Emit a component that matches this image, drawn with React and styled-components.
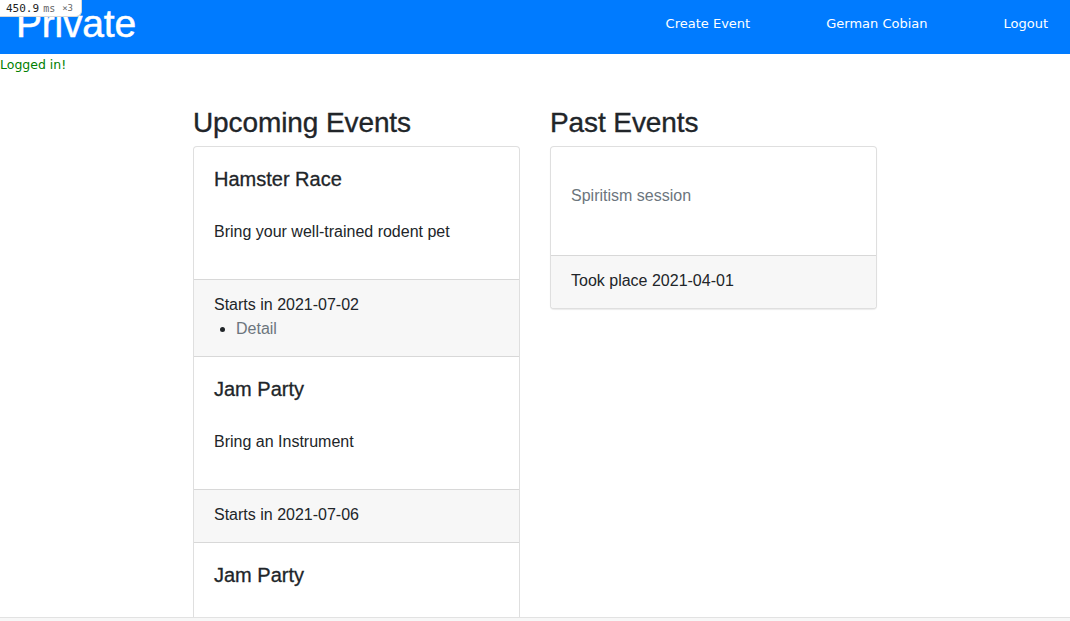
import React from 'react';
import styled, { createGlobalStyle } from 'styled-components';

const GlobalStyle = createGlobalStyle`
  html, body {
    margin: 0;
    padding: 0;
    height: 100%;
    background: #ffffff;
  }
  body {
    font-family: "Liberation Sans", Arial, sans-serif;
    color: #212529;
  }
  * {
    box-sizing: border-box;
  }
`;

const Page = styled.div`
  display: flex;
  flex-direction: column;
  height: 100vh;
  overflow: hidden;
  position: relative;
`;

const Navbar = styled.header`
  flex: none;
  height: 54px;
  background-color: #007bff;
  display: flex;
  justify-content: space-between;
  align-items: flex-start;
  overflow: hidden;
`;

const Brand = styled.div`
  color: #ffffff;
  font-family: "Liberation Sans", Arial, sans-serif;
  font-size: 39px;
  line-height: 39px;
  margin: 0 0 0 16px;
  padding-top: 4px;
  letter-spacing: -0.2px;
  -webkit-text-stroke: 0.5px #ffffff;
`;

const Nav = styled.nav`
  display: flex;
  align-items: center;
  gap: 76px;
  height: 46px;
  padding-right: 22px;
`;

const NavLink = styled.a`
  color: #ffffff;
  font-family: "DejaVu Sans", Verdana, sans-serif;
  font-size: 13px;
  text-decoration: none;
  cursor: pointer;
`;

const Flash = styled.div`
  flex: none;
  color: #008000;
  font-family: "DejaVu Sans", Verdana, sans-serif;
  font-size: 12.5px;
  line-height: 22px;
`;

const Main = styled.main`
  flex: 1;
  overflow: hidden;
  padding-top: 30px;
`;

const Container = styled.div`
  width: 684px;
  margin: 0 auto;
  display: grid;
  grid-template-columns: 327px 327px;
  gap: 30px;
  align-items: start;
`;

const Column = styled.section`
  display: flex;
  flex-direction: column;
`;

const Heading = styled.h3`
  margin: 0 0 6px;
  font-size: 28px;
  font-weight: 400;
  line-height: 34px;
  color: #212529;
  letter-spacing: -0.1px;
  -webkit-text-stroke: 0.35px #212529;
`;

const Card = styled.div`
  background: #ffffff;
  border: 1px solid rgba(0, 0, 0, 0.125);
  border-radius: 4px;
  overflow: hidden;
  box-shadow: ${p => (p.shadow ? '0 1px 1px rgba(0, 0, 0, 0.08)' : 'none')};
`;

const CardBody = styled.div`
  padding: 20px;
`;

const CardTitle = styled.h5`
  margin: 0 0 28px;
  font-size: 20px;
  font-weight: 400;
  line-height: 24px;
  color: #212529;
  -webkit-text-stroke: 0.3px #212529;
`;

const CardText = styled.p`
  margin: 0 0 15px;
  font-size: 16px;
  line-height: 24px;
  padding-top: 1px;
  color: ${p => (p.muted ? '#6c757d' : '#212529')};
`;

const Subtitle = styled(CardText)`
  margin: 16px 0 27px;
`;

const CardFooter = styled.div`
  background: #f7f7f7;
  border-top: 1px solid rgba(0, 0, 0, 0.125);
  border-bottom: ${p => (p.last ? 'none' : '1px solid rgba(0, 0, 0, 0.125)')};
  padding: 13px 20px 15px;
  font-size: 16px;
  line-height: 24px;
  color: #212529;
`;

const DetailList = styled.ul`
  margin: 0;
  padding-left: 22px;
  list-style: disc;
`;

const DetailLink = styled.a`
  color: #6c757d;
  text-decoration: none;
  cursor: pointer;
`;

const Footer = styled.footer`
  flex: none;
  height: 4px;
  background: #f7f7f7;
  border-top: 1px solid #e2e2e2;
`;

const TimingBadge = styled.div`
  position: absolute;
  top: 0;
  left: 0;
  height: 17px;
  padding: 0 8px 0 6px;
  display: flex;
  align-items: center;
  background: #ffffff;
  border: 1px solid #d8d8d8;
  border-top: none;
  border-left: none;
  border-bottom-right-radius: 6px;
  font-family: "DejaVu Sans Mono", "Liberation Mono", monospace;
  color: #222;
  white-space: nowrap;
`;

const TimingValue = styled.span`
  font-size: 11px;
`;

const TimingUnit = styled.span`
  font-size: ${p => p.size || 10}px;
  margin-left: ${p => p.gap || 4}px;
  color: #666;
`;

const upcoming = [
  { title: 'Hamster Race', text: 'Bring your well-trained rodent pet', date: '2021-07-02', detail: true },
  { title: 'Jam Party', text: 'Bring an Instrument', date: '2021-07-06' },
  { title: 'Jam Party', text: 'Bring an Instrument', date: '2021-07-10' },
];

const past = [{ text: 'Spiritism session', date: '2021-04-01' }];

const App = () => {
  return (
    <Page>
      <GlobalStyle />
      <Navbar>
        <Brand>Private</Brand>
        <Nav>
          <NavLink>Create Event</NavLink>
          <NavLink>German Cobian</NavLink>
          <NavLink>Logout</NavLink>
        </Nav>
      </Navbar>
      <Flash>Logged in!</Flash>
      <Main>
        <Container>
          <Column>
            <Heading>Upcoming Events</Heading>
            <Card>
              {upcoming.map((ev, i) => (
                <React.Fragment key={i}>
                  <CardBody>
                    <CardTitle>{ev.title}</CardTitle>
                    <CardText>{ev.text}</CardText>
                  </CardBody>
                  <CardFooter last={i === upcoming.length - 1}>
                    Starts in {ev.date}
                    {ev.detail && (
                      <DetailList>
                        <li><DetailLink>Detail</DetailLink></li>
                      </DetailList>
                    )}
                  </CardFooter>
                </React.Fragment>
              ))}
            </Card>
          </Column>
          <Column>
            <Heading>Past Events</Heading>
            <Card shadow>
              {past.map((ev, i) => (
                <React.Fragment key={i}>
                  <CardBody>
                    <Subtitle muted>{ev.text}</Subtitle>
                  </CardBody>
                  <CardFooter last>Took place {ev.date}</CardFooter>
                </React.Fragment>
              ))}
            </Card>
          </Column>
        </Container>
      </Main>
      <Footer />
      <TimingBadge>
        <TimingValue>450.9</TimingValue>
        <TimingUnit>ms</TimingUnit>
        <TimingUnit size={9} gap={7}>×3</TimingUnit>
      </TimingBadge>
    </Page>
  );
};

export default App;
